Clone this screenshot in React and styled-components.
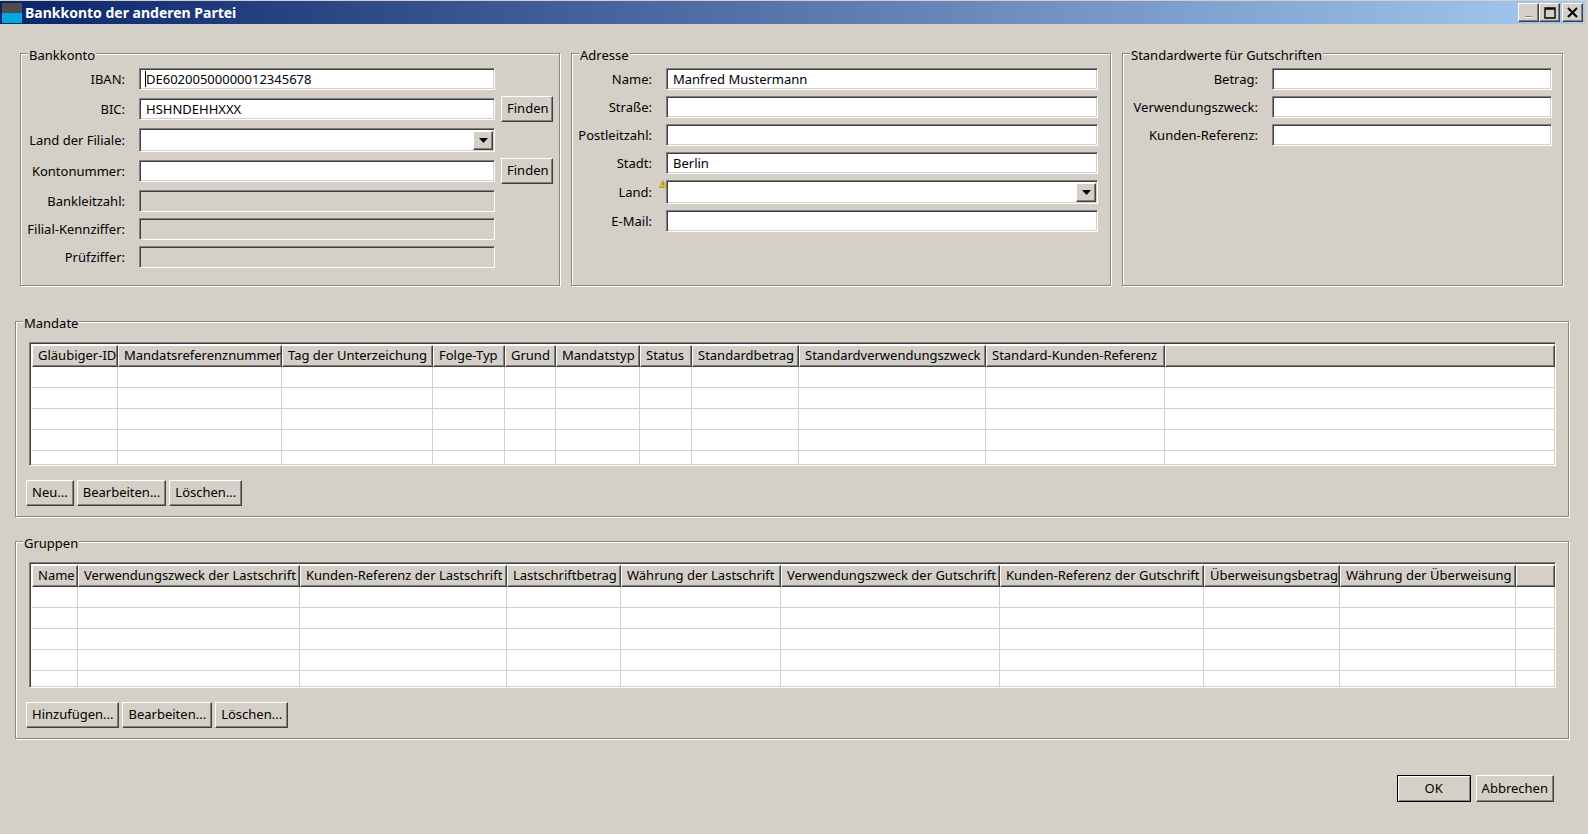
import React from "react";
import styled, {createGlobalStyle} from "styled-components";

const FACE = '#d4d0c8';

const mandateColumns = [
    ['Gläubiger-ID', 86], ['Mandatsreferenznummer', 164], ['Tag der Unterzeichung', 151], ['Folge-Typ', 72],
    ['Grund', 51], ['Mandatstyp', 84], ['Status', 52], ['Standardbetrag', 107],
    ['Standardverwendungszweck', 187], ['Standard-Kunden-Referenz', 179], ['', undefined],
];
const groupColumns = [
    ['Name', 46], ['Verwendungszweck der Lastschrift', 222], ['Kunden-Referenz der Lastschrift', 207], ['Lastschriftbetrag', 114],
    ['Währung der Lastschrift', 160], ['Verwendungszweck der Gutschrift', 219], ['Kunden-Referenz der Gutschrift', 204],
    ['Überweisungsbetrag', 136], ['Währung der Überweisung', 176], ['', undefined],
];

function Table({columns, height}) {
    return (
        <TableFrame $height={height}>
            <Grid>
                <colgroup>
                    {columns.map(([name, width], i) => <col key={i} width={width}/>)}
                </colgroup>
                <thead>
                    <tr>{columns.map(([name], i) => <HeadCell key={i}>{name}</HeadCell>)}</tr>
                </thead>
                <tbody>
                    {[0, 1, 2, 3, 4, 5].map(r => (
                        <tr key={r}>{columns.map((c, i) => <Cell key={i}/>)}</tr>
                    ))}
                </tbody>
            </Grid>
        </TableFrame>
    );
}

function ArrowBox() {
    return (
        <ComboButton>
            <svg width="9" height="5" viewBox="0 0 9 5"><path d="M0 0h9L4.5 5z" fill="#000"/></svg>
        </ComboButton>
    );
}

function WarningMark() {
    return (
        <Warning width="8" height="8" viewBox="0 0 8 8">
            <path d="M4 .5 7.6 7.5H.4z" fill="#f5c542" stroke="#b98a2a" strokeWidth=".8"/>
            <path d="M4 2.6v2.6M4 6v.8" stroke="#7a4a10" strokeWidth=".9"/>
        </Warning>
    );
}

function App() {
    return (
        <>
            <GlobalStyle/>
            <Window>
                <TitleBar>
                    <AppIcon/>
                    <TitleText>Bankkonto der anderen Partei</TitleText>
                    <WindowButton>
                        <svg width="10" height="10" viewBox="0 0 10 10"><path d="M1 8h7v2H1z" fill="#fff"/><path d="M1 8h7v1H1z" fill="#808080"/></svg>
                    </WindowButton>
                    <WindowButton>
                        <svg width="12" height="12" viewBox="0 0 12 12"><path d="M1 1h10v10H1zM1 2h10" fill="none" stroke="#000" strokeWidth="1.4"/></svg>
                    </WindowButton>
                    <CloseButton>
                        <svg width="11" height="11" viewBox="0 0 11 11"><path d="M1 1l9 9M10 1l-9 9" stroke="#000" strokeWidth="2"/></svg>
                    </CloseButton>
                </TitleBar>

                <TopRow>
                    <GroupBox>
                        <Legend>Bankkonto</Legend>
                        <BankForm>
                            <BankLabel>IBAN:</BankLabel>
                            <CaretField>
                                <Input readOnly defaultValue="DE60200500000012345678"/>
                                <Caret/>
                            </CaretField>
                            <span/>

                            <BankLabel>BIC:</BankLabel>
                            <Input readOnly defaultValue="HSHNDEHHXXX"/>
                            <Button>Finden</Button>

                            <BankLabel>Land der Filiale:</BankLabel>
                            <ComboField><ArrowBox/></ComboField>
                            <span/>

                            <BankLabel>Kontonummer:</BankLabel>
                            <Input readOnly/>
                            <Button>Finden</Button>

                            <BankLabel>Bankleitzahl:</BankLabel>
                            <Input readOnly disabled/>
                            <span/>

                            <BankLabel>Filial-Kennziffer:</BankLabel>
                            <Input readOnly disabled/>
                            <span/>

                            <BankLabel>Prüfziffer:</BankLabel>
                            <Input readOnly disabled/>
                            <span/>
                        </BankForm>
                    </GroupBox>

                    <GroupBox>
                        <Legend>Adresse</Legend>
                        <AddressForm>
                            <FieldLabel>Name:</FieldLabel>
                            <Input readOnly defaultValue="Manfred Mustermann"/>
                            <FieldLabel>Straße:</FieldLabel>
                            <Input readOnly/>
                            <FieldLabel>Postleitzahl:</FieldLabel>
                            <Input readOnly/>
                            <FieldLabel>Stadt:</FieldLabel>
                            <Input readOnly defaultValue="Berlin"/>
                            <FieldLabel>Land:</FieldLabel>
                            <ComboField><WarningMark/><ArrowBox/></ComboField>
                            <FieldLabel>E-Mail:</FieldLabel>
                            <Input readOnly/>
                        </AddressForm>
                    </GroupBox>

                    <GroupBox>
                        <Legend>Standardwerte für Gutschriften</Legend>
                        <DefaultsForm>
                            <FieldLabel>Betrag:</FieldLabel>
                            <Input readOnly/>
                            <FieldLabel>Verwendungszweck:</FieldLabel>
                            <Input readOnly/>
                            <FieldLabel>Kunden-Referenz:</FieldLabel>
                            <Input readOnly/>
                        </DefaultsForm>
                    </GroupBox>
                </TopRow>

                <WideGroup $height={196}>
                    <Legend>Mandate</Legend>
                    <Table columns={mandateColumns} height={124}/>
                    <ButtonRow>
                        <Button>Neu...</Button>
                        <Button>Bearbeiten...</Button>
                        <Button>Löschen...</Button>
                    </ButtonRow>
                </WideGroup>

                <WideGroup $height={198}>
                    <Legend>Gruppen</Legend>
                    <Table columns={groupColumns} height={126}/>
                    <ButtonRow>
                        <Button>Hinzufügen...</Button>
                        <Button>Bearbeiten...</Button>
                        <Button>Löschen...</Button>
                    </ButtonRow>
                </WideGroup>

                <Footer>
                    <DefaultButton>OK</DefaultButton>
                    <FooterButton>Abbrechen</FooterButton>
                </Footer>
            </Window>
        </>
    );
}

const GlobalStyle = createGlobalStyle`
  html, body {
    margin: 0;
    background: ${FACE};
  }
  body {
    font-family: "Noto Sans", "Liberation Sans", sans-serif;
    font-size: 13px;
    color: #000;
  }
`;
const Window = styled.div`
  width: 1588px;
  height: 834px;
  padding-top: 1px;
  box-sizing: border-box;
  overflow: hidden;
  background: ${FACE};
`;
const TitleBar = styled.div`
  display: flex;
  align-items: center;
  height: 23px;
  margin-right: 3px;
  padding: 0 2px 0 2px;
  background: linear-gradient(to right, #0a246a, #a6caf0);
`;
const AppIcon = styled.div`
  width: 20px;
  height: 20px;
  margin-right: 3px;
  background: linear-gradient(to bottom, #4d4d4d 50%, #00a8e0 50%);
`;
const TitleText = styled.div`
  flex: 1;
  color: #fff;
  font-weight: bold;
  font-size: 14px;
  white-space: nowrap;
`;
const raised = `
  border: 1px solid;
  border-color: #fff #404040 #404040 #fff;
  box-shadow: inset -1px -1px 0 #808080;
  background: ${FACE};
`;
const WindowButton = styled.div`
  ${raised}
  box-sizing: border-box;
  display: flex;
  align-items: center;
  justify-content: center;
  width: 21px;
  height: 19px;
`;
const CloseButton = styled(WindowButton)`
  margin-left: 2px;
`;
const TopRow = styled.div`
  display: grid;
  grid-template-columns: 540px 540px 441px;
  gap: 11px;
  margin: 29px 0 0 20px;
`;
const GroupBox = styled.div`
  position: relative;
  box-sizing: border-box;
  height: 233px;
  padding: 14px 7px 0 0;
  border: 1px solid #8a8883;
  box-shadow: inset 1px 1px 0 #fff, 1px 1px 0 #fff;
`;
const WideGroup = styled(GroupBox)`
  width: 1554px;
  height: ${p => p.$height}px;
  margin: 35px 0 0 15px;
  padding: 20px 0 0 10px;
  & + & {
    margin-top: 24px;
  }
`;
const Legend = styled.div`
  position: absolute;
  top: -8px;
  left: 7px;
  padding: 0 1px;
  line-height: 18px;
  background: ${FACE};
`;
const BankForm = styled.div`
  display: grid;
  grid-template-columns: 112px 356px 52px;
  column-gap: 6px;
  row-gap: 6px;
  align-items: center;
`;
const AddressForm = styled.div`
  display: grid;
  grid-template-columns: 80px 1fr;
  column-gap: 14px;
  row-gap: 6px;
  align-items: center;
  padding-right: 5px;
`;
const DefaultsForm = styled.div`
  display: grid;
  grid-template-columns: 135px 1fr;
  column-gap: 14px;
  row-gap: 6px;
  align-items: center;
  padding-right: 3px;
`;
const FieldLabel = styled.label`
  text-align: right;
  white-space: nowrap;
`;
const BankLabel = styled(FieldLabel)`
  padding-right: 8px;
`;
const sunken = `
  box-sizing: border-box;
  border: 1px solid;
  border-color: #808080 #fff #fff #808080;
  box-shadow: inset 1px 1px 0 #404040, inset -1px -1px 0 ${FACE};
`;
const Input = styled.input`
  ${sunken}
  display: block;
  width: 100%;
  height: 22px;
  margin: 0;
  padding: 0 6px;
  font: inherit;
  color: #000;
  outline: none;
  border-radius: 0;
  background: #fff;
  &:disabled {
    background: ${FACE};
  }
`;
const CaretField = styled.div`
  position: relative;
`;
const Caret = styled.span`
  position: absolute;
  top: 3px;
  left: 6px;
  width: 1px;
  height: 16px;
  background: #000;
`;
const ComboField = styled.div`
  ${sunken}
  position: relative;
  display: flex;
  justify-content: flex-end;
  height: 24px;
  padding: 2px 1px 1px 0;
  background: #fff;
`;
const ComboButton = styled.div`
  ${raised}
  box-sizing: border-box;
  display: flex;
  align-items: center;
  justify-content: center;
  width: 20px;
`;
const Warning = styled.svg`
  position: absolute;
  top: -1px;
  left: -8px;
`;
const Button = styled.button`
  ${raised}
  box-sizing: border-box;
  height: 26px;
  margin: 0;
  padding: 0 5px 2px;
  font: inherit;
  color: #000;
  border-radius: 0;
  white-space: nowrap;
`;
const ButtonRow = styled.div`
  display: flex;
  gap: 3px;
  margin-top: 14px;
`;
const Footer = styled.div`
  display: flex;
  justify-content: flex-end;
  gap: 5px;
  margin: 36px 34px 0 0;
`;
const FooterButton = styled(Button)`
  height: 27px;
`;
const DefaultButton = styled(FooterButton)`
  width: 74px;
  border: none;
  outline: 1px solid #000;
  outline-offset: -1px;
  box-shadow: inset 2px 2px 0 #fff, inset -2px -2px 0 #808080;
`;
const TableFrame = styled.div`
  ${sunken}
  width: 1527px;
  height: ${p => p.$height}px;
  margin-left: 3px;
  padding: 2px 0 0 2px;
  overflow: hidden;
  background: #fff;
`;
const Grid = styled.table`
  width: 100%;
  table-layout: fixed;
  border-collapse: separate;
  border-spacing: 0;
`;
const HeadCell = styled.th`
  ${raised}
  box-sizing: border-box;
  height: 22px;
  padding: 0 5px 2px;
  font-weight: normal;
  text-align: left;
  white-space: nowrap;
  overflow: hidden;
`;
const Cell = styled.td`
  box-sizing: border-box;
  height: 21px;
  padding: 0;
  border-right: 1px solid ${FACE};
  border-bottom: 1px solid ${FACE};
`;

export default App;
